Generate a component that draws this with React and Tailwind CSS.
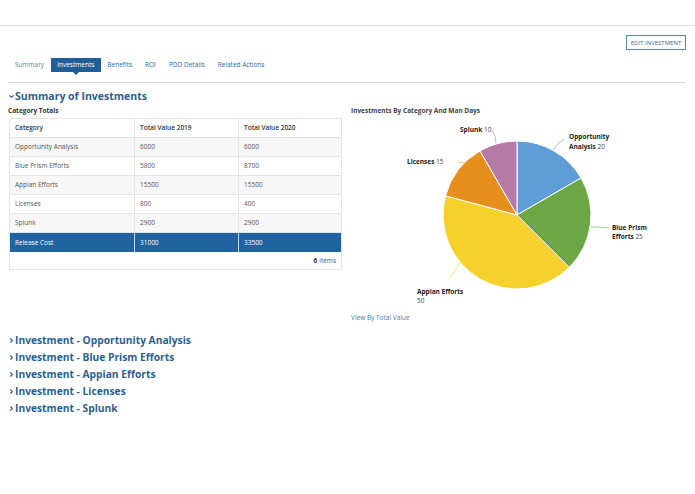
import { ChevronDown, ChevronRight } from 'lucide-react';

const rows = [
    ['Opportunity Analysis', '6000', '6000'],
    ['Blue Prism Efforts', '5800', '8700'],
    ['Appian Efforts', '15500', '15500'],
    ['Licenses', '800', '400'],
    ['Splunk', '2900', '2900'],
];

const tabs = ['Summary', 'Investments', 'Benefits', 'ROI', 'PDD Details', 'Related Actions'];

const slices = [
    { value: 20, color: '#5e9dd6' },
    { value: 25, color: '#6ca645' },
    { value: 50, color: '#f6d12b' },
    { value: 15, color: '#e68f1d' },
    { value: 10, color: '#b57aa5' },
];

function pt(cx, cy, r, deg) {
    const a = ((deg - 90) * Math.PI) / 180;
    return [cx + r * Math.cos(a), cy + r * Math.sin(a)];
}

function Pie() {
    const cx = 166, cy = 98, r = 74;
    const total = slices.reduce((s, x) => s + x.value, 0);
    let start = 0;
    const paths = slices.map((s, i) => {
        const sweep = (s.value / total) * 360;
        const [x1, y1] = pt(cx, cy, r, start);
        const [x2, y2] = pt(cx, cy, r, start + sweep);
        const large = sweep > 180 ? 1 : 0;
        const d = `M${cx},${cy} L${x1},${y1} A${r},${r} 0 ${large} 1 ${x2},${y2} Z`;
        start += sweep;
        return <path key={i} d={d} fill={s.color} stroke="#fff" strokeWidth="1" />;
    });
    return (
        <svg width="343" height="197" viewBox="0 0 343 197" className="block" style={{ fontFamily: '"Open Sans", sans-serif' }}>
            {paths}
            {/* leader lines */}
            <path d="M202,33 Q207,25 214,22" fill="none" stroke="#5e9dd6" strokeWidth="0.6" />
            <path d="M240,110 Q250,110 258,111" fill="none" stroke="#6ca645" strokeWidth="0.6" />
            <path d="M111,143 Q106,151 98,162" fill="none" stroke="#f6d12b" strokeWidth="0.6" />
            <path d="M123,52 Q116,45 107,45" fill="none" stroke="#e68f1d" strokeWidth="0.6" />
            <path d="M145,26 Q145,19 141,13" fill="none" stroke="#b57aa5" strokeWidth="0.6" />
            <g fontSize="6.5" fill="#222">
                <text x="218" y="22"><tspan fontWeight="700">Opportunity</tspan></text>
                <text x="218" y="32"><tspan fontWeight="700">Analysis</tspan><tspan fill="#444"> 20</tspan></text>
                <text x="261" y="113"><tspan fontWeight="700">Blue Prism</tspan></text>
                <text x="261" y="122"><tspan fontWeight="700">Efforts</tspan><tspan fill="#444"> 25</tspan></text>
                <text x="66" y="177"><tspan fontWeight="700">Appian Efforts</tspan></text>
                <text x="66" y="186" fill="#444">50</text>
                <text x="56" y="47"><tspan fontWeight="700">Licenses</tspan><tspan fill="#444"> 15</tspan></text>
                <text x="109" y="15"><tspan fontWeight="700">Splunk</tspan><tspan fill="#444"> 10</tspan></text>
            </g>
        </svg>
    );
}

export default function App() {
    return (
        <div className="w-[695px] h-[494px] bg-white text-[#333]" style={{ fontFamily: '"Open Sans", sans-serif' }}>
            <div className="h-[26px] border-b border-[#dcdcdc]" />
            <div className="flex justify-end pr-[9px] pt-[9px]">
                <button className="border border-[#5a87b3] px-[3px] h-[15px] w-[60px] text-[6px] text-[#3a6690] leading-none">
                    EDIT INVESTMENT
                </button>
            </div>
            <div className="mx-[8px] mr-[9px] mt-[8px] border-b border-[#dcdcdc] pb-[10px] flex items-center text-[6.5px] pl-[0.5px]">
                {tabs.map((t) =>
                    t === 'Investments' ? (
                        <div key={t} className="relative h-[14px] px-[6.5px] flex items-center justify-center bg-[#1f5f99] text-white">
                            {t}
                            <div className="absolute bottom-[-3px] left-1/2 -translate-x-1/2 w-0 h-0 border-l-[3px] border-r-[3px] border-t-[3px] border-l-transparent border-r-transparent border-t-[#1f5f99]" />
                        </div>
                    ) : (
                        <div key={t} className={`px-[6.5px] ${t === 'Summary' ? 'text-[#5f84a8]' : 'text-[#2d6aa0]'}`}>{t}</div>
                    )
                )}
            </div>
            <div className="px-[8px] pt-[6px]">
                <div className="flex items-center text-[#2c5f91] font-bold text-[10.5px] leading-[14px]">
                    <ChevronDown className="w-[7px] h-[7px]" strokeWidth={4} />
                    <span>Summary of Investments</span>
                </div>
                <div className="flex mt-[2px]">
                    <div className="w-[335px]">
                        <div className="text-[6.5px] font-bold text-[#333] leading-[12px]">Category Totals</div>
                        <div className="ml-[1px] mt-[1px] w-[333px] border border-[#e4e4e4] text-[6.5px]">
                            <div className="flex h-[19px] items-center font-semibold text-[#333] border-b border-[#e4e4e4]">
                                <div className="w-[124px] pl-[5px]">Category</div>
                                <div className="w-[104px] pl-[5px] border-l border-[#e4e4e4] h-full flex items-center">Total Value 2019</div>
                                <div className="flex-1 pl-[5px] border-l border-[#e4e4e4] h-full flex items-center">Total Value 2020</div>
                            </div>
                            {rows.map((r, i) => (
                                <div key={r[0]} className={`flex h-[19px] items-center text-[#555] border-b border-[#e4e4e4] ${i % 2 === 0 ? 'bg-[#f7f7f7]' : 'bg-white'}`}>
                                    <div className="w-[124px] pl-[5px]">{r[0]}</div>
                                    <div className="w-[104px] pl-[5px] border-l border-[#e4e4e4] h-full flex items-center">{r[1]}</div>
                                    <div className="flex-1 pl-[5px] border-l border-[#e4e4e4] h-full flex items-center">{r[2]}</div>
                                </div>
                            ))}
                            <div className="flex h-[19px] items-center bg-[#1f64a1] text-white">
                                <div className="w-[124px] pl-[5px]">Release Cost</div>
                                <div className="w-[104px] pl-[5px] border-l border-[#c9d8e6] h-full flex items-center">31000</div>
                                <div className="flex-1 pl-[5px] border-l border-[#c9d8e6] h-full flex items-center">33500</div>
                            </div>
                            <div className="h-[17px] flex items-center justify-end pr-[5px] text-[#555]">
                                <span className="font-bold text-[#333] mr-[2px]">6</span>items
                            </div>
                        </div>
                    </div>
                    <div className="ml-[9px] flex-1">
                        <div className="text-[6.5px] font-bold text-[#444] leading-[12px]">Investments By Category And Man Days</div>
                        <Pie />
                        <div className="text-[6.5px] text-[#4a7eb0] mt-[-1px]">View By Total Value</div>
                    </div>
                </div>
                <div className="mt-[9px] flex flex-col text-[#2c5f91] font-bold text-[10.25px] leading-[17px]">
                    {['Opportunity Analysis', 'Blue Prism Efforts', 'Appian Efforts', 'Licenses', 'Splunk'].map((n) => (
                        <div key={n} className="flex items-center">
                            <ChevronRight className="w-[7px] h-[7px]" strokeWidth={4} />
                            <span>Investment - {n}</span>
                        </div>
                    ))}
                </div>
            </div>
        </div>
    );
}
